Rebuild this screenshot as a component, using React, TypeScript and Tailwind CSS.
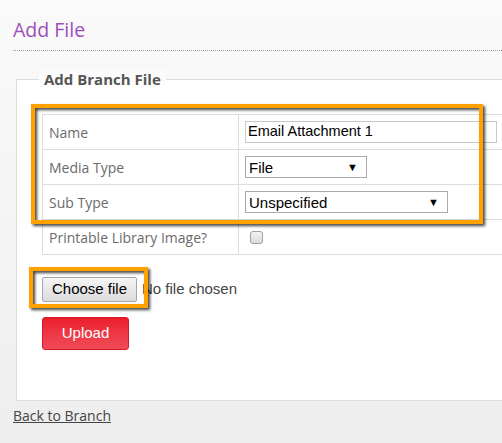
import React from "react";

function Select({ value, width }: { value: string; width: string }) {
  return (
    <div
      className={`${width} h-[22px] border border-[#a9a9a9] bg-white flex items-center justify-between pl-[3px] pr-[8px] font-['Liberation_Sans',sans-serif] text-[15px] text-black`}
    >
      <span className="leading-none">{value}</span>
      <span className="text-[11px] leading-none">▼</span>
    </div>
  );
}

export default function App() {
  const labelCell =
    "h-[35px] w-[196px] border border-[#dcdcdc] pl-[6px] text-[14px] text-[#6b6b6b] align-middle";
  const valueCell = "h-[35px] border border-[#dcdcdc] pl-[6px] align-middle";
  return (
    <div className="w-[502px] h-[443px] overflow-hidden bg-gradient-to-b from-[#fafafa] to-[#eeeeee] font-['Open_Sans',sans-serif]">
      <div className="pl-[13px] pt-[17px]">
        <h1 className="text-[19.5px] leading-[26px] text-[#9d4db9] font-normal">Add File</h1>
        <div className="mt-[7px] border-b border-dotted border-[#9a9a9a]" />
      </div>

      <div className="relative ml-[16px] mt-[28px] w-[520px] h-[322px] border border-[#dddddd] bg-white">
        <div className="absolute -top-[11px] left-[22px] px-[5px] text-[15px] leading-[20px] font-bold text-[#555555] bg-gradient-to-b from-[#fafafa] to-white">
          Add Branch File
        </div>

        <div className="pl-[25px] pt-[34px]">
          <div className="relative">
            <table className="border-collapse w-[480px]">
              <tbody>
                <tr>
                  <td className={labelCell}>Name</td>
                  <td className={valueCell}>
                    <div className="w-[252px] h-[22px] border border-[#c8c8c8] bg-white flex items-center px-[2px] font-['Liberation_Sans',sans-serif] text-[14.5px] text-black">
                      Email Attachment 1
                    </div>
                  </td>
                </tr>
                <tr>
                  <td className={labelCell}>Media Type</td>
                  <td className={valueCell}>
                    <Select value="File" width="w-[122px]" />
                  </td>
                </tr>
                <tr>
                  <td className={labelCell}>Sub Type</td>
                  <td className={valueCell}>
                    <Select value="Unspecified" width="w-[203px]" />
                  </td>
                </tr>
                <tr>
                  <td className={labelCell}>Printable Library Image?</td>
                  <td className={valueCell}>
                    <div className="ml-[5px] w-[13px] h-[13px] rounded-[3px] border border-[#a0a0a0] bg-gradient-to-b from-[#f4f4f4] to-[#dadada]" />
                  </td>
                </tr>
              </tbody>
            </table>
            <div className="absolute -left-[11px] -top-[10px] w-[452px] h-[120px] border-4 border-[#ffa200] drop-shadow-[2px_2px_1.5px_rgba(0,0,0,0.75)]" />
          </div>

          <div className="mt-[22px] flex items-center">
            <div className="relative">
              <div className="w-[95px] h-[25px] rounded-[2px] border border-[#a6a6a6] bg-gradient-to-b from-[#f5f5f5] to-[#dcdcdc] flex items-center justify-center font-['Liberation_Sans',sans-serif] text-[15px] text-black">
                Choose file
              </div>
              <div className="absolute -left-[13px] -top-[10px] w-[119px] h-[41px] border-4 border-[#ffa200] drop-shadow-[2px_2px_1.5px_rgba(0,0,0,0.75)]" />
            </div>
            <span className="ml-[5px] font-['Liberation_Sans',sans-serif] text-[15px] text-[#444444]">
              No file chosen
            </span>
          </div>

          <div className="mt-[15px] w-[87px] h-[33px] rounded-[3px] border border-[#d8182a] bg-gradient-to-b from-[#ec1b2d] to-[#f04a59] flex items-center justify-center font-['Liberation_Sans',sans-serif] text-[15px] text-white">
            Upload
          </div>
        </div>
      </div>

      <div className="pl-[13px] mt-[2px]">
        <span className="text-[14px] leading-[20px] text-[#444444] underline">Back to Branch</span>
      </div>
    </div>
  );
}
